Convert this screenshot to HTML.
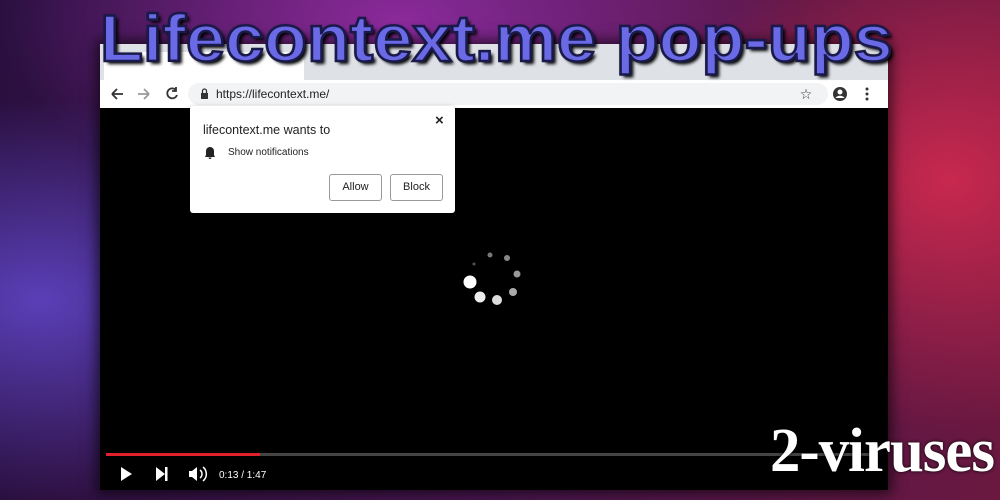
<!DOCTYPE html>
<html><head><style>
body{margin:0;width:1000px;height:500px;overflow:hidden;position:relative;font-family:"Liberation Sans",sans-serif;
background:
radial-gradient(ellipse 300px 250px at 950px 180px,#c8284e 0%,rgba(180,30,70,0) 100%),
radial-gradient(ellipse 300px 200px at 40px 300px,#5a3fb8 0%,rgba(80,50,160,0) 100%),
radial-gradient(ellipse 400px 200px at 400px 20px,#8a2a9a 0%,rgba(120,30,130,0) 100%),
linear-gradient(90deg,#2a1040 0%,#4a1650 50%,#6a1840 100%);}
.win{position:absolute;left:100px;top:44px;width:788px;height:446px;background:#000;box-shadow:0 0 12px 4px rgba(0,0,0,.6)}
.tabs{position:absolute;left:0;top:0;width:788px;height:36px;background:#dee1e6}
.tab{position:absolute;left:4px;top:8px;width:200px;height:28px;background:#fff;border-radius:8px 8px 0 0;font-size:12px;color:#333}
.bar{position:absolute;left:0;top:36px;width:788px;height:28px;background:#fff}
.url{position:absolute;left:88px;top:3px;width:640px;height:22px;border-radius:11px;background:#f1f3f4;font-size:12px;color:#222;line-height:22px;text-indent:28px}
.pop{position:absolute;left:190px;top:106px;width:265px;height:107px;background:#fff;border-radius:3px;box-shadow:0 2px 6px rgba(0,0,0,.4)}
.btn{position:absolute;top:68px;height:25px;border:1px solid #999;border-radius:3px;font-size:11px;line-height:25px;text-align:center;color:#222}
.title{position:absolute;left:100px;top:0px;font:bold 66px "Liberation Sans",sans-serif;color:#6a6ae6;-webkit-text-stroke:2.5px #1a1a4a;text-shadow:3px 3px 3px #000,0 0 2px #000;white-space:nowrap;transform-origin:0 0;transform:scaleX(1.065)}
.logo{position:absolute;left:770px;top:416px;font:bold 62px "Liberation Serif",serif;color:#fff;letter-spacing:-1px;text-shadow:0 0 4px #000;transform-origin:0 0;transform:scaleX(0.98)}
</style></head><body>
<div class="win">
 <div class="tabs"><div class="tab"></div></div>
 <div class="bar">
  <div class="url">https://lifecontext.me/</div>
  <svg width="788" height="28" style="position:absolute;left:0;top:0">
   <g stroke="#333" stroke-width="1.8" fill="none">
    <path d="M12 14h11M12 14l5-5M12 14l5 5"/>
    <path d="M38 14h11M49 14l-5-5M49 14l-5 5" stroke="#999"/>
    <path d="M76 10a5 5 0 1 0 1 5M76 7v4h-4"/>
   </g>
   <rect x="101" y="13" width="7" height="6" fill="#333"/><path d="M102.5 13v-2a2 2 0 0 1 4 0v2" stroke="#333" fill="none" stroke-width="1.3"/>
   <text x="706" y="19" font-size="14" fill="#333" text-anchor="middle" font-family="DejaVu Sans">☆</text>
   <circle cx="740" cy="14" r="7" fill="#333"/><circle cx="740" cy="12" r="2.5" fill="#fff"/><path d="M735.5 18a5 4 0 0 1 9 0" fill="#fff"/>
   <circle cx="767" cy="9" r="1.5" fill="#333"/><circle cx="767" cy="14" r="1.5" fill="#333"/><circle cx="767" cy="19" r="1.5" fill="#333"/>
  </svg>
 </div>
</div>
<div class="pop">
 <div style="position:absolute;left:13px;top:17px;font-size:12.5px;color:#222">lifecontext.me wants to</div>
 <div style="position:absolute;left:245px;top:6px;font-size:15px;font-weight:bold;color:#222">×</div>
 <svg style="position:absolute;left:14px;top:40px" width="12" height="13"><path d="M6 1a4 4 0 0 0-4 4v4l-1 2h10l-1-2V5a4 4 0 0 0-4-4zM4.5 11.5a1.5 1.5 0 0 0 3 0z" fill="#222"/></svg>
 <div style="position:absolute;left:38px;top:41px;font-size:10px;color:#222">Show notifications</div>
 <div class="btn" style="left:139px;width:51px">Allow</div>
 <div class="btn" style="left:200px;width:51px">Block</div>
</div>
<svg width="1000" height="500" style="position:absolute;left:0;top:0">
 <circle cx="474" cy="264" r="1.5" fill="#555"/><circle cx="490" cy="255" r="2.5" fill="#777"/>
 <circle cx="507" cy="258" r="3" fill="#888"/><circle cx="517" cy="274" r="3.5" fill="#999"/>
 <circle cx="513" cy="292" r="4" fill="#aaa"/><circle cx="497" cy="300" r="5" fill="#ddd"/>
 <circle cx="480" cy="297" r="5.5" fill="#eee"/><circle cx="470" cy="282" r="6.5" fill="#fff"/>
 <rect x="106" y="453" width="770" height="3" fill="#444"/><rect x="106" y="453" width="154" height="3" fill="#e0202a"/>
 <path d="M121 467l11 7-11 7z" fill="#fff"/><path d="M156 467l9 7-9 7z M165 467h2.5v14H165z" fill="#fff"/>
 <path d="M189 471h3l5-4v14l-5-4h-3z" fill="#fff"/><path d="M200 470a5 5 0 0 1 0 8M203 467a9 9 0 0 1 0 14" stroke="#fff" stroke-width="1.5" fill="none"/>
 <text x="219" y="478" font-size="10" fill="#fff" font-family="Liberation Sans">0:13 / 1:47</text>
</svg>
<div class="title">Lifecontext.me pop-ups</div>
<div class="logo">2-viruses</div>
</body></html>
